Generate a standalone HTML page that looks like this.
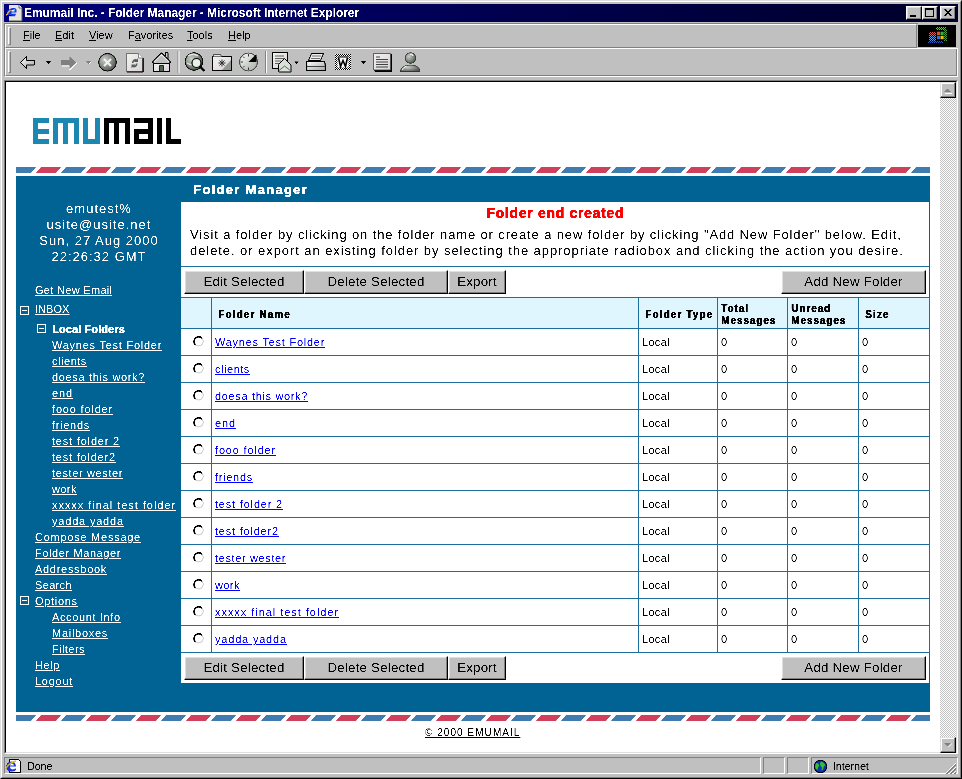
<!DOCTYPE html>
<html><head><meta charset="utf-8">
<style>
*{margin:0;padding:0;box-sizing:border-box}
html,body{width:962px;height:779px;overflow:hidden;background:#c0c0c0;font-family:"Liberation Sans",sans-serif;position:relative}
.a{position:absolute;white-space:nowrap}
.t13{font-size:13px;letter-spacing:0.87px;line-height:16px}
.t11{font-size:11px;letter-spacing:0.7px;line-height:16px}
.w{color:#fff}
u{text-decoration:underline}
.btn{position:absolute;background:#c0c0c0;border-style:solid;border-width:1px;border-color:#fff #000 #000 #fff;font-size:13.333px;color:#000;text-align:center;line-height:20px;padding-top:1px;letter-spacing:0.2px;box-shadow:inset -1px -1px 0 #808080,inset 1px 1px 0 #dfdfdf}
.menu{position:absolute;top:29px;font-size:11px;color:#000;line-height:13px}
.menu b{font-weight:normal;text-decoration:underline}
.a,.menu,.btn span{filter:url(#th)}
.btn span{display:inline-block}
</style></head><body>
<svg width="0" height="0" style="position:absolute"><filter id="th" filterUnits="userSpaceOnUse" x="-20" y="-20" width="1000" height="800"><feComponentTransfer><feFuncA type="table" tableValues="0 0 1 1"/></feComponentTransfer></filter></svg>

<div class="a" style="left:0;top:0;width:962px;height:779px;border-top:1px solid #dfdfdf;border-left:1px solid #dfdfdf;border-right:1px solid #000;border-bottom:1px solid #000"></div>
<div class="a" style="left:1px;top:1px;width:960px;height:777px;border-top:1px solid #fff;border-left:1px solid #fff;border-right:1px solid #808080;border-bottom:1px solid #808080"></div>
<div class="a" style="left:4px;top:4px;width:954px;height:18px;background:linear-gradient(to right,#00007c,#000028)"></div>
<div class="a" style="left:24px;top:5px;color:#fff;font-weight:bold;font-size:12px;line-height:16px;letter-spacing:-0.05px">Emumail Inc. - Folder Manager - Microsoft Internet Explorer</div>
<svg class="a" style="left:0;top:0" width="26" height="24" viewBox="0 0 26 24">
<path d="M9 5h10l3 3v13H9z" fill="#e4e4dc"/>
<path d="M22 8v13H9" stroke="#505050" stroke-width="1" fill="none"/>
<path d="M19 5v3h3" fill="#fff" stroke="#404040" stroke-width=".8"/>
<path d="M12 8h3l1.5 1.5v3H11.5v1.2h4.5l-1 2.5h-5.5l-2-2v-4z" fill="#1838e8"/>
<path d="M11.5 10h3v1.5h-3z" fill="#fff"/>
<path d="M13.5 9h1.5v1.5h-1.5z" fill="#30d0f0"/>
<path d="M6.5 15.5c1-2 2.2-4 4-5.5" stroke="#e0b040" stroke-width="1.3" fill="none"/>
<path d="M9 15h2.5v1h-2.5z" fill="#000"/>
</svg>
<div class="a" style="left:906px;top:6px;width:16px;height:14px;background:#c0c0c0;border-top:1px solid #fff;border-left:1px solid #fff;border-right:1px solid #000;border-bottom:1px solid #000;box-shadow:inset -1px -1px 0 #808080,inset 1px 1px 0 #dfdfdf"></div>
<div class="a" style="left:922px;top:6px;width:16px;height:14px;background:#c0c0c0;border-top:1px solid #fff;border-left:1px solid #fff;border-right:1px solid #000;border-bottom:1px solid #000;box-shadow:inset -1px -1px 0 #808080,inset 1px 1px 0 #dfdfdf"></div>
<div class="a" style="left:940px;top:6px;width:16px;height:14px;background:#c0c0c0;border-top:1px solid #fff;border-left:1px solid #fff;border-right:1px solid #000;border-bottom:1px solid #000;box-shadow:inset -1px -1px 0 #808080,inset 1px 1px 0 #dfdfdf"></div>
<div class="a" style="left:910px;top:15px;width:6px;height:2px;background:#000"></div>
<div class="a" style="left:925px;top:8px;width:9px;height:9px;border:1px solid #000;border-top-width:2px"></div>
<svg class="a" style="left:944px;top:9px" width="8" height="7" viewBox="0 0 8 7"><path d="M0 0h2l2 2.5L6 0h2L5 3.5 8 7H6L4 4.5 2 7H0l3-3.5z" fill="#000"/></svg>
<div class="a" style="left:4px;top:23px;width:914px;height:25px;border-top:1px solid #808080;border-left:1px solid #808080"></div>
<div class="a" style="left:5px;top:24px;width:912px;height:24px;border-top:1px solid #fff;border-left:1px solid #fff;border-bottom:1px solid #808080;border-right:1px solid #808080"></div>
<div class="a" style="left:4px;top:48px;width:954px;height:1px;background:#fff"></div>
<div class="a" style="left:4px;top:48px;width:954px;height:29px;border-left:1px solid #808080;border-right:1px solid #fff;border-bottom:1px solid #fff"></div>
<div class="a" style="left:5px;top:49px;width:952px;height:27px;border-left:1px solid #fff;border-bottom:1px solid #808080;border-right:1px solid #808080"></div>
<div class="a" style="left:8px;top:27px;width:3px;height:18px;border-top:1px solid #fff;border-left:1px solid #fff;border-right:1px solid #808080;border-bottom:1px solid #808080"></div>
<div class="a" style="left:8px;top:51px;width:3px;height:22px;border-top:1px solid #fff;border-left:1px solid #fff;border-right:1px solid #808080;border-bottom:1px solid #808080"></div>
<div class="a" style="left:918px;top:25px;width:38px;height:22px;background:#000"></div>
<svg class="a" style="left:918px;top:24px" width="40" height="24" viewBox="0 0 40 24">
<pattern id="chk2" width="2" height="2" patternUnits="userSpaceOnUse"><rect width="1" height="1" fill="#fff"/><rect x="1" y="1" width="1" height="1" fill="#fff"/></pattern><mask id="mk"><rect width="40" height="24" fill="url(#chk2)"/></mask><g mask="url(#mk)" opacity=".8"><path d="M11 8h7v4h-7z" fill="#e06060"/><path d="M11 12h7v5h-7z" fill="#60a0e0"/><path d="M18 3h10v3H18z" fill="#70c050"/><path d="M26 5h3v12h-3z" fill="#50a040"/><path d="M10 17h15v2H10z" fill="#3060c0"/></g>
<path d="M18.5 6.5h7v10h-7z" fill="#000"/>
<path d="M19 7.7h3v3.5h-3z" fill="#e84a28"/><path d="M22.5 7.7h3v3.5h-3z" fill="#38b040"/><path d="M19 11.9h3v3.3h-3z" fill="#3070e0"/><path d="M22.5 11.9h3v3.3h-3z" fill="#f0c010"/>
</svg>
<div class="menu" style="left:23px"><b>F</b>ile</div>
<div class="menu" style="left:55px"><b>E</b>dit</div>
<div class="menu" style="left:89px"><b>V</b>iew</div>
<div class="menu" style="left:128px">F<b>a</b>vorites</div>
<div class="menu" style="left:187px"><b>T</b>ools</div>
<div class="menu" style="left:228px"><b>H</b>elp</div>
<svg class="a" style="left:0;top:0" width="440" height="80">
<defs>
<linearGradient id="lg1" x1="0" y1="0" x2="1" y2="1"><stop offset="0" stop-color="#ffffff"/><stop offset="1" stop-color="#a0a8a0"/></linearGradient>
<linearGradient id="lg2" x1="0" y1="0" x2="1" y2="1"><stop offset="0" stop-color="#f4f4f0"/><stop offset="1" stop-color="#d8d0d8"/></linearGradient>
<radialGradient id="rg1" cx=".35" cy=".35" r=".7"><stop offset="0" stop-color="#c8d0c8"/><stop offset="1" stop-color="#505850"/></radialGradient>
</defs>
<!-- back -->
<path d="M20.5 62.5L26.5 56.5V60.5H34.5V65H26.5V68.5Z" fill="url(#lg1)" stroke="#000" stroke-width="1"/>
<path d="M46 61h5l-2.5 3z" fill="#000"/>
<!-- forward disabled -->
<path d="M62 66h8v3.5l7-7" stroke="#fff" stroke-width="1.2" fill="none"/>
<path d="M61 60h8.5v-4l7 6.5-7 6.5v-4H61z" fill="#808080"/>
<path d="M86 61h5l-2.5 3z" fill="#808080"/><path d="M89 64l2-2" stroke="#fff" stroke-width="1"/>
<!-- stop -->
<circle cx="107.5" cy="62.3" r="8.8" fill="url(#rg1)" stroke="#000" stroke-width="1"/>
<path d="M104 59l7 7M111 59l-7 7" stroke="#f0f0f0" stroke-width="2.2"/>
<!-- refresh -->
<path d="M126.5 53.5h12l4.5 4.5v13.5h-16.5z" fill="url(#lg2)" stroke="#707070" stroke-width="1"/>
<path d="M143 58v14h-16" stroke="#000" stroke-width="1.2" fill="none"/>
<path d="M138.5 53.5v4.5h4.5" fill="#fff" stroke="#808080" stroke-width="1"/>
<path d="M132 63a3.5 3.5 0 0 1 5-3.5l1-1.5v4h-4l1.2-1.2a2 2 0 0 0-1.7 2.2zM137.5 63.5a3.5 3.5 0 0 1-5 3.5l-1 1.5v-4h4l-1.2 1.2a2 2 0 0 0 1.7-2.2z" fill="#506050"/>
<!-- home -->
<path d="M153.5 63.5h16v8h-16z" fill="url(#lg2)" stroke="#000" stroke-width="1"/>
<path d="M152 63l9.5-9.5 9.5 9.5" stroke="#000" stroke-width="1.6" fill="none"/>
<path d="M154 62l7.5-7.5 7.5 7.5" stroke="#e8f0e8" stroke-width="1.2" fill="none"/>
<path d="M165.5 52.5h2.5v6.5l-2.5-2.5z" fill="#d0d0d0" stroke="#000" stroke-width="1"/>
<path d="M159.5 65.5h4v6h-4z" fill="#506050" stroke="#000" stroke-width=".8"/>
<!-- separator -->
<path d="M178 51v22" stroke="#808080"/><path d="M179 51v22" stroke="#fff"/>
<!-- search -->
<circle cx="194" cy="61.5" r="8.8" fill="url(#rg1)" stroke="#000" stroke-width="1"/>
<path d="M188 56c3-2 7-2 10 0M187 63c3 2 8 2 12 0" stroke="#e0e8e0" stroke-width="1.5" fill="none"/>
<circle cx="196.5" cy="63" r="4.5" fill="#e8f0e8" stroke="#000" stroke-width="1.2"/>
<path d="M199.5 66l5 5" stroke="#000" stroke-width="2.2"/>
<!-- favorites -->
<path d="M212.5 56.5h19v14h-19z" fill="url(#lg2)" stroke="#000" stroke-width="1"/>
<path d="M213.5 56.5v-2h7l1 2" fill="#e8e8e8" stroke="#505050" stroke-width="1"/>
<path d="M222 59.5v7M218.5 63h7M219.5 60.5l5 5M224.5 60.5l-5 5" stroke="#303030" stroke-width="1"/>
<path d="M222 70l9-10v10z" fill="#909890"/>
<!-- history -->
<circle cx="248.5" cy="62" r="9" fill="url(#lg1)" stroke="#404040" stroke-width="1"/>
<path d="M248.5 62l8-8v8z" fill="#000"/>
<path d="M248.5 54v2.5M240.5 62h2.5M248.5 70v-2.5M243 56.5l1.5 1.5M243 67.5l1.5-1.5" stroke="#303030" stroke-width="1"/>
<!-- separator -->
<path d="M265.5 51v22" stroke="#808080"/><path d="M266.5 51v22" stroke="#fff"/>
<!-- mail -->
<path d="M272.5 52.5h15v16h-15z" fill="url(#lg2)" stroke="#000" stroke-width="1"/>
<path d="M275 56h9M275 58.5h9M275 61h6M275 63.5h5" stroke="#606060" stroke-width="1"/>
<path d="M278.5 64.5l6-6 6.5 6.5v7h-12.5z" fill="#d8e0d8" stroke="#000" stroke-width="1"/>
<path d="M278.5 71l6-5 6.5 5" stroke="#606860" stroke-width="1" fill="none"/>
<path d="M294 61.5h5l-2.5 2.8z" fill="#000"/>
<!-- print -->
<path d="M311.5 53.5h12l-3 7h-12z" fill="#f0f0f0" stroke="#000" stroke-width="1"/>
<path d="M312 56h9M311 58.5h9" stroke="#707070" stroke-width="1"/>
<path d="M306.5 61.5h18l1 4v5h-19z" fill="url(#lg1)" stroke="#000" stroke-width="1.2"/>
<path d="M307 66.5h18" stroke="#404040" stroke-width="1"/>
<!-- edit W -->
<pattern id="chk" width="2" height="2" patternUnits="userSpaceOnUse"><rect width="1" height="1" fill="#000"/><rect x="1" y="1" width="1" height="1" fill="#000"/></pattern>
<rect x="335" y="54" width="16" height="16" fill="#fff"/>
<path d="M335 54h16v16h-16zM337.5 56.5v11h11v-11z" fill="url(#chk)" fill-rule="evenodd"/>
<path d="M338 57h10" stroke="#000" stroke-width="1"/>
<path d="M338.5 57.5l2 9 2.5-6 2.5 6 2-9" stroke="#000" stroke-width="1.6" fill="none"/>
<path d="M361 61h5l-2.5 3z" fill="#000"/>
<!-- discuss -->
<path d="M373.5 53.5h17v16.5h-17z" fill="url(#lg2)" stroke="#606060" stroke-width="1"/>
<path d="M391.5 54v17h-17" stroke="#000" stroke-width="1.3" fill="none"/>
<path d="M376 57h4M376 59.5h12M376 62h12M376 64.5h12M376 67h12" stroke="#404040" stroke-width="1"/>
<!-- messenger -->
<circle cx="410.5" cy="58" r="5.3" fill="url(#rg1)" stroke="#303030" stroke-width=".8"/>
<path d="M410 54.5a2 2 0 0 1 3 1.5" stroke="#fff" stroke-width="1.2" fill="none"/>
<path d="M400.5 71.5c0-4 4.5-6.5 10-6.5s9.5 2.5 9.5 6.5z" fill="url(#rg1)" stroke="#303030" stroke-width=".8"/>
<path d="M402.5 70c.5-2 2-3.2 4-3.8" stroke="#fff" stroke-width="1" fill="none"/>
</svg>
<div class="a" style="left:4px;top:80px;width:954px;height:674px;border-top:1px solid #808080;border-left:1px solid #808080;border-right:1px solid #fff;border-bottom:1px solid #fff"></div>
<div class="a" style="left:5px;top:81px;width:952px;height:672px;border-top:1px solid #000;border-left:1px solid #000;border-right:1px solid #dfdfdf;border-bottom:1px solid #dfdfdf;background:#fff"></div>
<div class="a" style="left:940px;top:82px;width:16px;height:671px;background-color:#c0c0c0;background-image:linear-gradient(45deg,#fff 25%,transparent 25%,transparent 75%,#fff 75%),linear-gradient(45deg,#fff 25%,transparent 25%,transparent 75%,#fff 75%);background-size:2px 2px;background-position:0 0,1px 1px"></div>
<div class="a" style="left:940px;top:82px;width:16px;height:16px;background:#c0c0c0;border-top:1px solid #dfdfdf;border-left:1px solid #dfdfdf;border-right:1px solid #000;border-bottom:1px solid #000;box-shadow:inset -1px -1px 0 #808080,inset 1px 1px 0 #fff"></div>
<div class="a" style="left:940px;top:737px;width:16px;height:16px;background:#c0c0c0;border-top:1px solid #dfdfdf;border-left:1px solid #dfdfdf;border-right:1px solid #000;border-bottom:1px solid #000;box-shadow:inset -1px -1px 0 #808080,inset 1px 1px 0 #fff"></div>
<svg class="a" style="left:940px;top:82px" width="16" height="16"><path d="M4 10h7L7.5 6.5z" fill="#808080"/><path d="M5 11h7v1H5z" fill="#fff"/></svg>
<svg class="a" style="left:940px;top:737px" width="16" height="16"><path d="M4 6h7L7.5 9.5z" fill="#808080"/><path d="M8 10l4-4v1l-3.5 3.5z" fill="#fff"/></svg>
<div class="a" style="left:16px;top:176px;width:914px;height:536px;background:#006494"></div>
<div class="a" style="left:181px;top:202px;width:748px;height:481px;background:#fff"></div>
<svg class="a" style="left:0;top:0" width="962" height="779">
<clipPath id="sc"><rect x="16" y="0" width="914" height="779"/></clipPath>
<g clip-path="url(#sc)"><path fill="#3f7cb0" d="M16 167h20l-5 6h-20zM66 167h20l-5 6h-20zM116 167h20l-5 6h-20zM166 167h20l-5 6h-20zM216 167h20l-5 6h-20zM266 167h20l-5 6h-20zM316 167h20l-5 6h-20zM366 167h20l-5 6h-20zM416 167h20l-5 6h-20zM466 167h20l-5 6h-20zM516 167h20l-5 6h-20zM566 167h20l-5 6h-20zM616 167h20l-5 6h-20zM666 167h20l-5 6h-20zM716 167h20l-5 6h-20zM766 167h20l-5 6h-20zM816 167h20l-5 6h-20zM866 167h20l-5 6h-20zM916 167h20l-5 6h-20zM16 715h20l-5 6h-20zM66 715h20l-5 6h-20zM116 715h20l-5 6h-20zM166 715h20l-5 6h-20zM216 715h20l-5 6h-20zM266 715h20l-5 6h-20zM316 715h20l-5 6h-20zM366 715h20l-5 6h-20zM416 715h20l-5 6h-20zM466 715h20l-5 6h-20zM516 715h20l-5 6h-20zM566 715h20l-5 6h-20zM616 715h20l-5 6h-20zM666 715h20l-5 6h-20zM716 715h20l-5 6h-20zM766 715h20l-5 6h-20zM816 715h20l-5 6h-20zM866 715h20l-5 6h-20zM916 715h20l-5 6h-20z"/><path fill="#cf405c" d="M41 167h20l-5 6h-20zM91 167h20l-5 6h-20zM141 167h20l-5 6h-20zM191 167h20l-5 6h-20zM241 167h20l-5 6h-20zM291 167h20l-5 6h-20zM341 167h20l-5 6h-20zM391 167h20l-5 6h-20zM441 167h20l-5 6h-20zM491 167h20l-5 6h-20zM541 167h20l-5 6h-20zM591 167h20l-5 6h-20zM641 167h20l-5 6h-20zM691 167h20l-5 6h-20zM741 167h20l-5 6h-20zM791 167h20l-5 6h-20zM841 167h20l-5 6h-20zM891 167h20l-5 6h-20zM41 715h20l-5 6h-20zM91 715h20l-5 6h-20zM141 715h20l-5 6h-20zM191 715h20l-5 6h-20zM241 715h20l-5 6h-20zM291 715h20l-5 6h-20zM341 715h20l-5 6h-20zM391 715h20l-5 6h-20zM441 715h20l-5 6h-20zM491 715h20l-5 6h-20zM541 715h20l-5 6h-20zM591 715h20l-5 6h-20zM641 715h20l-5 6h-20zM691 715h20l-5 6h-20zM741 715h20l-5 6h-20zM791 715h20l-5 6h-20zM841 715h20l-5 6h-20zM891 715h20l-5 6h-20z"/></g>
<g fill="#1f88b1">
<rect x="33" y="118" width="5" height="26"/><rect x="33" y="118" width="16" height="5"/><rect x="33" y="129" width="16" height="5"/><rect x="33" y="139" width="16" height="5"/>
<rect x="53" y="118" width="26" height="5"/><rect x="53" y="118" width="5" height="26"/><rect x="63" y="118" width="5" height="26"/><rect x="74" y="118" width="5" height="26"/>
<rect x="83" y="118" width="5" height="26"/><rect x="95" y="118" width="5" height="26"/><rect x="83" y="139" width="17" height="5"/>
</g>
<g fill="#000">
<rect x="104" y="118" width="26" height="5"/><rect x="104" y="118" width="5" height="26"/><rect x="114" y="118" width="5" height="26"/><rect x="125" y="118" width="5" height="26"/>
<rect x="134" y="118" width="19" height="5"/><rect x="148" y="118" width="5" height="26"/><rect x="134" y="129" width="19" height="5"/><rect x="134" y="129" width="5" height="15"/><rect x="134" y="139" width="19" height="5"/>
<rect x="157" y="118" width="5" height="26"/>
<rect x="166" y="118" width="5" height="26"/><rect x="166" y="139" width="15" height="5"/>
</g>
</svg>
<div class="a t13 w" style="left:17px;width:164px;text-align:center;top:201px;letter-spacing:1px">emutest%</div>
<div class="a t13 w" style="left:17px;width:164px;text-align:center;top:217px;letter-spacing:1px">usite@usite.net</div>
<div class="a t13 w" style="left:17px;width:164px;text-align:center;top:233px;letter-spacing:1px">Sun, 27 Aug 2000</div>
<div class="a t13 w" style="left:17px;width:164px;text-align:center;top:249px;letter-spacing:1px">22:26:32 GMT</div>
<div class="a" style="left:35px;top:282px;font-size:11px;line-height:16px;letter-spacing:0.303px;color:#fff"><u>Get New Email</u></div>
<div class="a" style="left:20px;top:306px;width:9px;height:9px;border:1px solid #fff"><div style="position:absolute;left:1px;top:3px;width:5px;height:1px;background:#fff"></div></div>
<div class="a" style="left:35px;top:301px;font-size:11px;line-height:16px;letter-spacing:0.053px;color:#fff"><u>INBOX</u></div>
<div class="a" style="left:37px;top:324px;width:9px;height:9px;border:1px solid #fff"><div style="position:absolute;left:1px;top:3px;width:5px;height:1px;background:#fff"></div></div>
<div class="a w" style="left:52px;top:321px;font-size:11px;line-height:16px;font-weight:bold;letter-spacing:0.082px;text-shadow:0.5px 0 0 #fff">Local Folders</div>
<div class="a" style="left:52px;top:337px;font-size:11px;line-height:16px;letter-spacing:0.75px;color:#fff"><u>Waynes Test Folder</u></div>
<div class="a" style="left:52px;top:353px;font-size:11px;line-height:16px;letter-spacing:0.53px;color:#fff"><u>clients</u></div>
<div class="a" style="left:52px;top:369px;font-size:11px;line-height:16px;letter-spacing:0.653px;color:#fff"><u>doesa this work?</u></div>
<div class="a" style="left:52px;top:385px;font-size:11px;line-height:16px;letter-spacing:0.847px;color:#fff"><u>end</u></div>
<div class="a" style="left:52px;top:401px;font-size:11px;line-height:16px;letter-spacing:0.82px;color:#fff"><u>fooo folder</u></div>
<div class="a" style="left:52px;top:417px;font-size:11px;line-height:16px;letter-spacing:0.71px;color:#fff"><u>friends</u></div>
<div class="a" style="left:52px;top:433px;font-size:11px;line-height:16px;letter-spacing:0.809px;color:#fff"><u>test folder 2</u></div>
<div class="a" style="left:52px;top:449px;font-size:11px;line-height:16px;letter-spacing:0.782px;color:#fff"><u>test folder2</u></div>
<div class="a" style="left:52px;top:465px;font-size:11px;line-height:16px;letter-spacing:0.625px;color:#fff"><u>tester wester</u></div>
<div class="a" style="left:52px;top:481px;font-size:11px;line-height:16px;letter-spacing:0.391px;color:#fff"><u>work</u></div>
<div class="a" style="left:52px;top:497px;font-size:11px;line-height:16px;letter-spacing:0.957px;color:#fff"><u>xxxxx final test folder</u></div>
<div class="a" style="left:52px;top:513px;font-size:11px;line-height:16px;letter-spacing:0.809px;color:#fff"><u>yadda yadda</u></div>
<div class="a" style="left:35px;top:529px;font-size:11px;line-height:16px;letter-spacing:0.748px;color:#fff"><u>Compose Message</u></div>
<div class="a" style="left:35px;top:545px;font-size:11px;line-height:16px;letter-spacing:0.596px;color:#fff"><u>Folder Manager</u></div>
<div class="a" style="left:35px;top:561px;font-size:11px;line-height:16px;letter-spacing:0.707px;color:#fff"><u>Addressbook</u></div>
<div class="a" style="left:35px;top:577px;font-size:11px;line-height:16px;letter-spacing:0.34px;color:#fff"><u>Search</u></div>
<div class="a" style="left:20px;top:596px;width:9px;height:9px;border:1px solid #fff"><div style="position:absolute;left:1px;top:3px;width:5px;height:1px;background:#fff"></div></div>
<div class="a" style="left:35px;top:593px;font-size:11px;line-height:16px;letter-spacing:0.697px;color:#fff"><u>Options</u></div>
<div class="a" style="left:52px;top:609px;font-size:11px;line-height:16px;letter-spacing:0.629px;color:#fff"><u>Account Info</u></div>
<div class="a" style="left:52px;top:625px;font-size:11px;line-height:16px;letter-spacing:0.73px;color:#fff"><u>Mailboxes</u></div>
<div class="a" style="left:52px;top:641px;font-size:11px;line-height:16px;letter-spacing:0.421px;color:#fff"><u>Filters</u></div>
<div class="a" style="left:35px;top:657px;font-size:11px;line-height:16px;letter-spacing:0.569px;color:#fff"><u>Help</u></div>
<div class="a" style="left:35px;top:673px;font-size:11px;line-height:16px;letter-spacing:0.757px;color:#fff"><u>Logout</u></div>
<div class="a t13 w" style="left:193px;top:182px;font-weight:bold;letter-spacing:1.28px;text-shadow:0.5px 0 0 #fff">Folder Manager</div>
<div class="a t13" style="left:181px;width:748px;text-align:center;top:205px;font-weight:bold;color:#f00;font-size:14px;letter-spacing:0.7px;text-shadow:0.6px 0 0 #f00">Folder end created</div>
<div class="a t13" style="left:190px;top:227px">Visit a folder by clicking on the folder name or create a new folder by clicking "Add New Folder" below. Edit,</div>
<div class="a t13" style="left:190px;top:243px;letter-spacing:0.93px">delete, or export an existing folder by selecting the appropriate radiobox and clicking the action you desire.</div>
<div class="a" style="left:181px;top:266px;width:748px;height:1px;background:#1d6e9c"></div>
<div class="btn" style="left:184px;top:270px;width:120px;height:24px"><span>Edit Selected</span></div>
<div class="btn" style="left:304px;top:270px;width:144px;height:24px"><span>Delete Selected</span></div>
<div class="btn" style="left:448px;top:270px;width:58px;height:24px"><span>Export</span></div>
<div class="btn" style="left:781px;top:270px;width:145px;height:24px"><span>Add New Folder</span></div>
<div class="btn" style="left:184px;top:656px;width:120px;height:24px"><span>Edit Selected</span></div>
<div class="btn" style="left:304px;top:656px;width:144px;height:24px"><span>Delete Selected</span></div>
<div class="btn" style="left:448px;top:656px;width:58px;height:24px"><span>Export</span></div>
<div class="btn" style="left:781px;top:656px;width:145px;height:24px"><span>Add New Folder</span></div>
<div class="a" style="left:181px;top:297px;width:749px;height:31px;background:#e0f6ff"></div>
<div class="a" style="left:181px;top:297px;width:749px;height:1px;background:#1d6e9c"></div>
<div class="a" style="left:181px;top:328px;width:749px;height:1px;background:#1d6e9c"></div>
<div class="a" style="left:181px;top:355px;width:749px;height:1px;background:#1d6e9c"></div>
<div class="a" style="left:181px;top:382px;width:749px;height:1px;background:#1d6e9c"></div>
<div class="a" style="left:181px;top:409px;width:749px;height:1px;background:#1d6e9c"></div>
<div class="a" style="left:181px;top:436px;width:749px;height:1px;background:#1d6e9c"></div>
<div class="a" style="left:181px;top:463px;width:749px;height:1px;background:#1d6e9c"></div>
<div class="a" style="left:181px;top:490px;width:749px;height:1px;background:#1d6e9c"></div>
<div class="a" style="left:181px;top:517px;width:749px;height:1px;background:#1d6e9c"></div>
<div class="a" style="left:181px;top:544px;width:749px;height:1px;background:#1d6e9c"></div>
<div class="a" style="left:181px;top:571px;width:749px;height:1px;background:#1d6e9c"></div>
<div class="a" style="left:181px;top:598px;width:749px;height:1px;background:#1d6e9c"></div>
<div class="a" style="left:181px;top:625px;width:749px;height:1px;background:#1d6e9c"></div>
<div class="a" style="left:181px;top:652px;width:749px;height:1px;background:#1d6e9c"></div>
<div class="a" style="left:211px;top:297px;width:1px;height:356px;background:#1d6e9c"></div>
<div class="a" style="left:638px;top:297px;width:1px;height:356px;background:#1d6e9c"></div>
<div class="a" style="left:717px;top:297px;width:1px;height:356px;background:#1d6e9c"></div>
<div class="a" style="left:787px;top:297px;width:1px;height:356px;background:#1d6e9c"></div>
<div class="a" style="left:858px;top:297px;width:1px;height:356px;background:#1d6e9c"></div>
<div class="a" style="left:929px;top:297px;width:1px;height:356px;background:#1d6e9c"></div>
<div class="a" style="left:218px;top:309px;font-size:10px;font-weight:bold;letter-spacing:1.1px;line-height:12px;text-shadow:0.6px 0 0 #000">Folder Name</div>
<div class="a" style="left:645px;top:309px;font-size:10px;font-weight:bold;letter-spacing:1.1px;line-height:12px;text-shadow:0.6px 0 0 #000">Folder Type</div>
<div class="a" style="left:721px;top:303px;font-size:10px;font-weight:bold;letter-spacing:1.1px;line-height:12px;text-shadow:0.6px 0 0 #000;letter-spacing:0.9px">Total<br>Messages</div>
<div class="a" style="left:791px;top:303px;font-size:10px;font-weight:bold;letter-spacing:1.1px;line-height:12px;text-shadow:0.6px 0 0 #000;letter-spacing:0.9px">Unread<br>Messages</div>
<div class="a" style="left:865px;top:309px;font-size:10px;font-weight:bold;letter-spacing:1.1px;line-height:12px;text-shadow:0.6px 0 0 #000">Size</div>
<svg class="a" style="left:193px;top:336px" width="12" height="12" viewBox="0 0 12 12"><path d="M2.28 8.72A4.7 4.7 0 0 0 8.92 2.08" stroke="#d0d0d0" stroke-width="1.2" fill="none"/><path d="M8.92 2.08A4.7 4.7 0 0 0 2.28 8.72" stroke="#000" stroke-width="1.6" fill="none"/></svg>
<div class="a" style="left:215px;top:334px;font-size:11px;line-height:16px;letter-spacing:0.75px;color:#00f"><u>Waynes Test Folder</u></div>
<div class="a t11" style="left:642px;top:334px;letter-spacing:0.3px">Local</div>
<div class="a t11" style="left:721px;top:334px">0</div>
<div class="a t11" style="left:791px;top:334px">0</div>
<div class="a t11" style="left:862px;top:334px">0</div>
<svg class="a" style="left:193px;top:363px" width="12" height="12" viewBox="0 0 12 12"><path d="M2.28 8.72A4.7 4.7 0 0 0 8.92 2.08" stroke="#d0d0d0" stroke-width="1.2" fill="none"/><path d="M8.92 2.08A4.7 4.7 0 0 0 2.28 8.72" stroke="#000" stroke-width="1.6" fill="none"/></svg>
<div class="a" style="left:215px;top:361px;font-size:11px;line-height:16px;letter-spacing:0.53px;color:#00f"><u>clients</u></div>
<div class="a t11" style="left:642px;top:361px;letter-spacing:0.3px">Local</div>
<div class="a t11" style="left:721px;top:361px">0</div>
<div class="a t11" style="left:791px;top:361px">0</div>
<div class="a t11" style="left:862px;top:361px">0</div>
<svg class="a" style="left:193px;top:390px" width="12" height="12" viewBox="0 0 12 12"><path d="M2.28 8.72A4.7 4.7 0 0 0 8.92 2.08" stroke="#d0d0d0" stroke-width="1.2" fill="none"/><path d="M8.92 2.08A4.7 4.7 0 0 0 2.28 8.72" stroke="#000" stroke-width="1.6" fill="none"/></svg>
<div class="a" style="left:215px;top:388px;font-size:11px;line-height:16px;letter-spacing:0.653px;color:#00f"><u>doesa this work?</u></div>
<div class="a t11" style="left:642px;top:388px;letter-spacing:0.3px">Local</div>
<div class="a t11" style="left:721px;top:388px">0</div>
<div class="a t11" style="left:791px;top:388px">0</div>
<div class="a t11" style="left:862px;top:388px">0</div>
<svg class="a" style="left:193px;top:417px" width="12" height="12" viewBox="0 0 12 12"><path d="M2.28 8.72A4.7 4.7 0 0 0 8.92 2.08" stroke="#d0d0d0" stroke-width="1.2" fill="none"/><path d="M8.92 2.08A4.7 4.7 0 0 0 2.28 8.72" stroke="#000" stroke-width="1.6" fill="none"/></svg>
<div class="a" style="left:215px;top:415px;font-size:11px;line-height:16px;letter-spacing:0.847px;color:#00f"><u>end</u></div>
<div class="a t11" style="left:642px;top:415px;letter-spacing:0.3px">Local</div>
<div class="a t11" style="left:721px;top:415px">0</div>
<div class="a t11" style="left:791px;top:415px">0</div>
<div class="a t11" style="left:862px;top:415px">0</div>
<svg class="a" style="left:193px;top:444px" width="12" height="12" viewBox="0 0 12 12"><path d="M2.28 8.72A4.7 4.7 0 0 0 8.92 2.08" stroke="#d0d0d0" stroke-width="1.2" fill="none"/><path d="M8.92 2.08A4.7 4.7 0 0 0 2.28 8.72" stroke="#000" stroke-width="1.6" fill="none"/></svg>
<div class="a" style="left:215px;top:442px;font-size:11px;line-height:16px;letter-spacing:0.82px;color:#00f"><u>fooo folder</u></div>
<div class="a t11" style="left:642px;top:442px;letter-spacing:0.3px">Local</div>
<div class="a t11" style="left:721px;top:442px">0</div>
<div class="a t11" style="left:791px;top:442px">0</div>
<div class="a t11" style="left:862px;top:442px">0</div>
<svg class="a" style="left:193px;top:471px" width="12" height="12" viewBox="0 0 12 12"><path d="M2.28 8.72A4.7 4.7 0 0 0 8.92 2.08" stroke="#d0d0d0" stroke-width="1.2" fill="none"/><path d="M8.92 2.08A4.7 4.7 0 0 0 2.28 8.72" stroke="#000" stroke-width="1.6" fill="none"/></svg>
<div class="a" style="left:215px;top:469px;font-size:11px;line-height:16px;letter-spacing:0.71px;color:#00f"><u>friends</u></div>
<div class="a t11" style="left:642px;top:469px;letter-spacing:0.3px">Local</div>
<div class="a t11" style="left:721px;top:469px">0</div>
<div class="a t11" style="left:791px;top:469px">0</div>
<div class="a t11" style="left:862px;top:469px">0</div>
<svg class="a" style="left:193px;top:498px" width="12" height="12" viewBox="0 0 12 12"><path d="M2.28 8.72A4.7 4.7 0 0 0 8.92 2.08" stroke="#d0d0d0" stroke-width="1.2" fill="none"/><path d="M8.92 2.08A4.7 4.7 0 0 0 2.28 8.72" stroke="#000" stroke-width="1.6" fill="none"/></svg>
<div class="a" style="left:215px;top:496px;font-size:11px;line-height:16px;letter-spacing:0.809px;color:#00f"><u>test folder 2</u></div>
<div class="a t11" style="left:642px;top:496px;letter-spacing:0.3px">Local</div>
<div class="a t11" style="left:721px;top:496px">0</div>
<div class="a t11" style="left:791px;top:496px">0</div>
<div class="a t11" style="left:862px;top:496px">0</div>
<svg class="a" style="left:193px;top:525px" width="12" height="12" viewBox="0 0 12 12"><path d="M2.28 8.72A4.7 4.7 0 0 0 8.92 2.08" stroke="#d0d0d0" stroke-width="1.2" fill="none"/><path d="M8.92 2.08A4.7 4.7 0 0 0 2.28 8.72" stroke="#000" stroke-width="1.6" fill="none"/></svg>
<div class="a" style="left:215px;top:523px;font-size:11px;line-height:16px;letter-spacing:0.782px;color:#00f"><u>test folder2</u></div>
<div class="a t11" style="left:642px;top:523px;letter-spacing:0.3px">Local</div>
<div class="a t11" style="left:721px;top:523px">0</div>
<div class="a t11" style="left:791px;top:523px">0</div>
<div class="a t11" style="left:862px;top:523px">0</div>
<svg class="a" style="left:193px;top:552px" width="12" height="12" viewBox="0 0 12 12"><path d="M2.28 8.72A4.7 4.7 0 0 0 8.92 2.08" stroke="#d0d0d0" stroke-width="1.2" fill="none"/><path d="M8.92 2.08A4.7 4.7 0 0 0 2.28 8.72" stroke="#000" stroke-width="1.6" fill="none"/></svg>
<div class="a" style="left:215px;top:550px;font-size:11px;line-height:16px;letter-spacing:0.625px;color:#00f"><u>tester wester</u></div>
<div class="a t11" style="left:642px;top:550px;letter-spacing:0.3px">Local</div>
<div class="a t11" style="left:721px;top:550px">0</div>
<div class="a t11" style="left:791px;top:550px">0</div>
<div class="a t11" style="left:862px;top:550px">0</div>
<svg class="a" style="left:193px;top:579px" width="12" height="12" viewBox="0 0 12 12"><path d="M2.28 8.72A4.7 4.7 0 0 0 8.92 2.08" stroke="#d0d0d0" stroke-width="1.2" fill="none"/><path d="M8.92 2.08A4.7 4.7 0 0 0 2.28 8.72" stroke="#000" stroke-width="1.6" fill="none"/></svg>
<div class="a" style="left:215px;top:577px;font-size:11px;line-height:16px;letter-spacing:0.391px;color:#00f"><u>work</u></div>
<div class="a t11" style="left:642px;top:577px;letter-spacing:0.3px">Local</div>
<div class="a t11" style="left:721px;top:577px">0</div>
<div class="a t11" style="left:791px;top:577px">0</div>
<div class="a t11" style="left:862px;top:577px">0</div>
<svg class="a" style="left:193px;top:606px" width="12" height="12" viewBox="0 0 12 12"><path d="M2.28 8.72A4.7 4.7 0 0 0 8.92 2.08" stroke="#d0d0d0" stroke-width="1.2" fill="none"/><path d="M8.92 2.08A4.7 4.7 0 0 0 2.28 8.72" stroke="#000" stroke-width="1.6" fill="none"/></svg>
<div class="a" style="left:215px;top:604px;font-size:11px;line-height:16px;letter-spacing:0.957px;color:#00f"><u>xxxxx final test folder</u></div>
<div class="a t11" style="left:642px;top:604px;letter-spacing:0.3px">Local</div>
<div class="a t11" style="left:721px;top:604px">0</div>
<div class="a t11" style="left:791px;top:604px">0</div>
<div class="a t11" style="left:862px;top:604px">0</div>
<svg class="a" style="left:193px;top:633px" width="12" height="12" viewBox="0 0 12 12"><path d="M2.28 8.72A4.7 4.7 0 0 0 8.92 2.08" stroke="#d0d0d0" stroke-width="1.2" fill="none"/><path d="M8.92 2.08A4.7 4.7 0 0 0 2.28 8.72" stroke="#000" stroke-width="1.6" fill="none"/></svg>
<div class="a" style="left:215px;top:631px;font-size:11px;line-height:16px;letter-spacing:0.809px;color:#00f"><u>yadda yadda</u></div>
<div class="a t11" style="left:642px;top:631px;letter-spacing:0.3px">Local</div>
<div class="a t11" style="left:721px;top:631px">0</div>
<div class="a t11" style="left:791px;top:631px">0</div>
<div class="a t11" style="left:862px;top:631px">0</div>
<div class="a" style="left:425px;top:726px;font-size:10px;line-height:14px;color:#000;letter-spacing:1.05px"><u>&copy; 2000 EMUMAIL</u></div>
<div class="a" style="left:4px;top:757px;width:757px;height:17px;border-top:1px solid #808080;border-left:1px solid #808080;border-right:1px solid #fff;border-bottom:1px solid #fff"></div>
<div class="a" style="left:763px;top:757px;width:22px;height:17px;border-top:1px solid #808080;border-left:1px solid #808080;border-right:1px solid #fff;border-bottom:1px solid #fff"></div>
<div class="a" style="left:787px;top:757px;width:22px;height:17px;border-top:1px solid #808080;border-left:1px solid #808080;border-right:1px solid #fff;border-bottom:1px solid #fff"></div>
<div class="a" style="left:811px;top:757px;width:147px;height:17px;border-top:1px solid #808080;border-left:1px solid #808080;border-right:1px solid #fff;border-bottom:1px solid #fff"></div>
<svg class="a" style="left:5px;top:757px" width="20" height="17" viewBox="0 0 20 17">
<path d="M4.5 2.5h9l2 2v11h-11z" fill="#fff" stroke="#000"/>
<path d="M1 10c0-3 2.5-5.5 5.5-5.5S11 7 11 9.5H5c0 2 1 3 3 3 1 0 2-.7 2.5-1.2l.7 1.5c-.8.8-2 1.7-3.7 1.7C3.5 14.5 1 12.5 1 10zM5 8.5h4c0-1-1-2-2-2s-2 1-2 2z" fill="#1830e0"/>
<path d="M0 13c2-4 6-8 11-9" stroke="#e0c000" stroke-width="1.3" fill="none"/>
</svg>
<div class="a" style="left:27px;top:760px;font-size:11px;line-height:13px;letter-spacing:-0.25px">Done</div>
<svg class="a" style="left:813px;top:759px" width="16" height="15" viewBox="0 0 16 15">
<circle cx="7.5" cy="7.5" r="6.3" fill="#1030b0" stroke="#000" stroke-width="1"/>
<path d="M3 4c2 0 3 1 3 2.5S4 9 5 11c-2-.5-3-2-3-3.5zM8 2.5c2 .5 4 2 4.5 4-1 0-2 1-2 2.5s-1 2-2 2.5c0-2 1-3-.5-4S7 4 8 2.5z" fill="#30c030"/>
</svg>
<div class="a" style="left:833px;top:760px;font-size:11px;line-height:13px;letter-spacing:-0.2px">Internet</div>
<svg class="a" style="left:944px;top:762px" width="13" height="13"><path d="M12 1L1 12M12 5L5 12M12 9L9 12" stroke="#fff" stroke-width="1"/><path d="M12 2L2 12M12 3L3 12M12 6L6 12M12 7L7 12M12 10L10 12M12 11L11 12" stroke="#808080" stroke-width="1"/></svg>
</body></html>
